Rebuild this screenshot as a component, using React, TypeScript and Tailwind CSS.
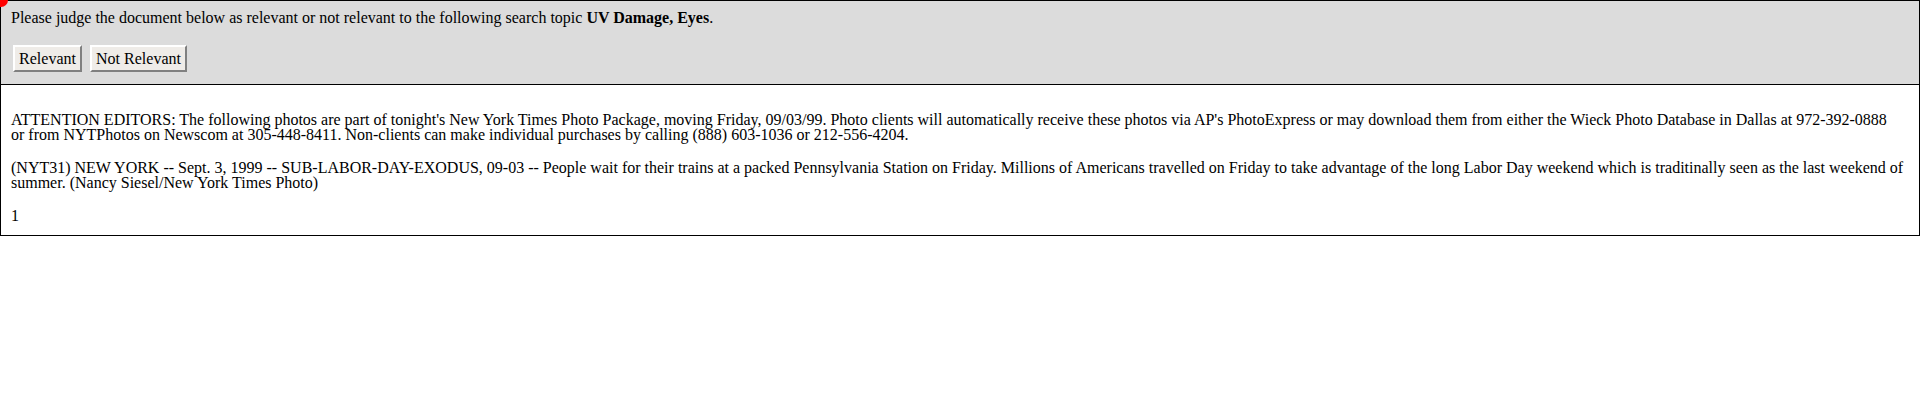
export default function App() {
  return (
    <div className="relative w-[1920px] font-['Liberation_Serif','Times_New_Roman',serif] text-[16px] text-black">
      <div className="absolute -left-[6px] -top-[7px] h-[14px] w-[14px] rounded-full bg-[#ff0000]" />
      <div className="border border-black bg-[#dcdcdc] px-[10px] pt-[8px] pb-[12px]">
        <p className="leading-[18px]">
          Please judge the document below as relevant or not relevant to the following search topic{' '}
          <b>UV Damage, Eyes</b>.
        </p>
        <div className="mt-[18px] flex gap-[8px] pl-[2px]">
          <button className="h-[27px] w-[69px] border-2 border-[#ffffff] border-r-[#808080] border-b-[#808080] bg-[#efece8] leading-[18px]">
            Relevant
          </button>
          <button className="h-[27px] w-[97px] border-2 border-[#ffffff] border-r-[#808080] border-b-[#808080] bg-[#efece8] leading-[18px]">
            Not Relevant
          </button>
        </div>
      </div>
      <div className="border border-t-0 border-black pl-[10px] pr-[6px] pt-[27px] pb-[12px] leading-[15px]">
        <p>
          ATTENTION EDITORS: The following photos are part of tonight's New York Times Photo Package, moving Friday, 09/03/99. Photo clients will automatically receive these photos via AP's PhotoExpress or may download them from either the Wieck Photo Database in Dallas at 972-392-0888
          <br />
          or from NYTPhotos on Newscom at 305-448-8411. Non-clients can make individual purchases by calling (888) 603-1036 or 212-556-4204.
        </p>
        <p className="mt-[18px]">
          (NYT31) NEW YORK -- Sept. 3, 1999 -- SUB-LABOR-DAY-EXODUS, 09-03 -- People wait for their trains at a packed Pennsylvania Station on Friday. Millions of Americans travelled on Friday to take advantage of the long Labor Day weekend which is traditinally seen as the last weekend of
          <br />
          summer. (Nancy Siesel/New York Times Photo)
        </p>
        <p className="mt-[18px]">1</p>
      </div>
    </div>
  );
}
